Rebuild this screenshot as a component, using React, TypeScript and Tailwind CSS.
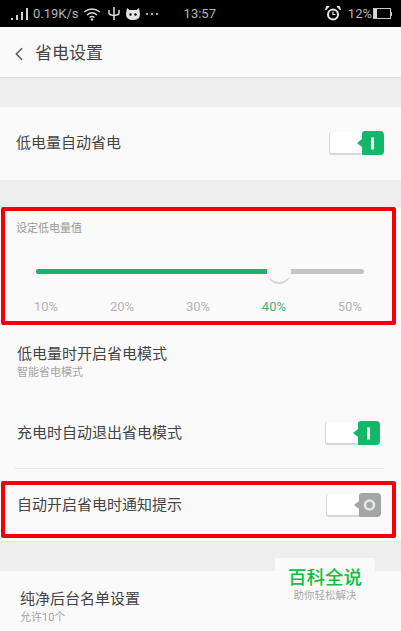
import { ChevronLeft } from "lucide-react";

const fontStack = "font-['Roboto','Noto_Sans_CJK_SC',sans-serif]";

function Toggle({ on }: { on: boolean }) {
  return (
    <div className="flex items-start">
      <div className="mt-px h-[23px] w-[33px] rounded-l-[3px] rounded-br-[2px] border-b-2 border-l border-[#d8d8d8] bg-white" />
      <svg width="27" height="25" viewBox="0 0 27 25" className="-ml-[5px]">
        <path
          d="M5 8 L5 3 Q5 0 8 0 L23 0 Q27 0 27 4 L27 20 Q27 24 23 24 L5 24 L5 16 L0 12 Z"
          fill={on ? "#12b76a" : "#a3a6a5"}
        />
        {on ? (
          <rect x="14" y="6.5" width="3" height="12" fill="#fff" />
        ) : (
          <circle cx="15.5" cy="12" r="4.5" fill="none" stroke="#e8e8e8" strokeWidth="2.5" />
        )}
      </svg>
    </div>
  );
}

function StatusBar() {
  return (
    <div className="flex h-[27px] items-center bg-black pl-[11px] pr-[9px] text-[13px] text-[#b5b5b5]">
      <svg width="18" height="14" viewBox="0 0 18 14" fill="#d0d0d0">
        <rect x="0" y="11" width="2" height="2" />
        <rect x="5" y="8" width="2" height="5" />
        <rect x="10" y="5" width="2" height="8" />
        <rect x="15" y="1" width="2" height="12" />
      </svg>
      <span className="ml-[4px]">0.19K/s</span>
      <svg width="18" height="14" viewBox="0 0 18 14" fill="none" stroke="#d8d8d8" strokeWidth="1.5" className="ml-[4px]">
        <path d="M1 5 Q9 -1 17 5" />
        <path d="M4 8 Q9 3.5 14 8" />
        <path d="M6.5 10.5 Q9 8.5 11.5 10.5" />
        <circle cx="9" cy="12.5" r="0.6" fill="#d8d8d8" />
      </svg>
      <svg width="14" height="15" viewBox="0 0 14 15" fill="none" stroke="#e0e0e0" strokeWidth="1.5" className="ml-[6px]">
        <path d="M7 1 V14" />
        <path d="M2 4 V7 Q2 9 7 9.5 Q12 9 12 7 V4" />
      </svg>
      <svg width="14" height="12" viewBox="0 0 14 12" fill="#e4e4e4" className="ml-[5px]">
        <path d="M1 0 L3.5 2 H10.5 L13 0 L14 6 Q14 12 7 12 Q0 12 0 6 Z" />
        <circle cx="4.5" cy="6.5" r="1.2" fill="#000" />
        <circle cx="9.5" cy="6.5" r="1.2" fill="#000" />
      </svg>
      <span className="ml-[6px] flex gap-[3px]">
        <i className="size-[2px] rounded-full bg-[#d8d8d8]" />
        <i className="size-[2px] rounded-full bg-[#d8d8d8]" />
        <i className="size-[2px] rounded-full bg-[#d8d8d8]" />
      </span>
      <span className="ml-[26px]">13:57</span>
      <svg width="16" height="15" viewBox="0 0 16 15" className="ml-auto">
        <circle cx="8" cy="8.5" r="5" fill="none" stroke="#e8e8e8" strokeWidth="2" />
        <path d="M8 5.5 V8.5 H10.5" fill="none" stroke="#e8e8e8" strokeWidth="1.2" />
        <path d="M0.5 4 L4 0.5 L1.5 0.5 Z M15.5 4 L12 0.5 L14.5 0.5 Z" fill="#e8e8e8" stroke="#e8e8e8" />
      </svg>
      <span className="ml-[7px]">12%</span>
      <div className="ml-px flex h-[11px] w-[18px] border border-[#c8c8c8]">
        <div className="h-full w-[3px] bg-[#d8d8d8]" />
      </div>
      <div className="h-[4px] w-px bg-[#c8c8c8]" />
    </div>
  );
}

const ticks = ["10%", "20%", "30%", "40%", "50%"];

export default function App() {
  return (
    <div className={`flex h-[631px] w-[401px] flex-col overflow-hidden bg-[#eeeeee] ${fontStack}`}>
      <StatusBar />

      <header className="flex h-[50px] items-center bg-[#fafafa] pl-[8px] pt-[3px] text-[#444]">
        <ChevronLeft className="size-[22px] text-[#555]" strokeWidth={1.5} />
        <h1 className="ml-[5px] text-[17px] font-normal">省电设置</h1>
      </header>
      <div className="h-px bg-[#dedede]" />

      <div className="mt-[29px] flex h-[73px] items-center justify-between bg-[#fafafa] pl-[16px] pr-[17px]">
        <span className="text-[15px] text-[#444]">低电量自动省电</span>
        <Toggle on />
      </div>

      <div className="mt-[27px] bg-[#fafafa]">
        <section className="mx-px h-[118px] w-[395px] rounded-[2px] border-[4px] border-[#f50000] pl-[11px] pr-[28px]">
          <p className="mt-[11px] text-[11px] leading-[14px] text-[#999]">设定低电量值</p>
          <div className="relative mt-[33px] ml-[20px] flex h-[5px] w-[328px] overflow-visible rounded-full bg-[#c4c4c4]">
            <div className="w-[243px] rounded-l-full bg-[#12b76a]" />
            <div className="absolute left-[231px] top-[-9.5px] size-[24px] rounded-full border-b-2 border-[#d6d6d6] bg-[#fafafa]" />
          </div>
          <div className="mt-[25px] ml-[18px] flex w-[328px] justify-between text-[13px] leading-[15px] text-[#b4b4b4]">
            {ticks.map((t) => (
              <span key={t} className={t === "40%" ? "text-[#3db57c]" : ""}>
                {t}
              </span>
            ))}
          </div>
        </section>
      </div>

      <div className="flex h-[157px] flex-col bg-[#fafafa] pl-[17px] pr-[16px]">
        <p className="mt-[19px] text-[15px] leading-[20px] text-[#444]">低电量时开启省电模式</p>
        <p className="mt-[1px] text-[11px] leading-[15px] text-[#a5a5a5]">智能省电模式</p>
        <div className="mt-[29px] flex h-[48px] items-center justify-between">
          <span className="text-[15px] text-[#444]">充电时自动退出省电模式</span>
          <div className="mr-[5px]">
            <Toggle on />
          </div>
        </div>
        <div className="-ml-[3px] mt-[11px] h-px bg-[#ebebeb]" />
      </div>

      <div className="bg-[#fafafa]">
        <section className="mx-px -mt-px flex h-[57px] w-[395px] items-center justify-between rounded-[2px] border-[4px] border-[#f50000] pb-[8px] pl-[12px] pr-[11px]">
          <span className="text-[15px] text-[#444]">自动开启省电时通知提示</span>
          <Toggle on={false} />
        </section>
        <div className="h-[3px]" />
        <div className="h-px bg-[#e4e4e4]" />
      </div>

      <div className="relative mt-[29px] flex-1 bg-[#fafafa] pl-[20px]">
        <p className="mt-[18px] text-[15px] leading-[20px] text-[#444]">纯净后台名单设置</p>
        <p className="mt-[1px] text-[11px] leading-[15px] text-[#a5a5a5]">允许10个</p>
        {/* watermark sits over the page */}
        <div className="absolute left-[275px] top-[-13px] flex h-[50px] w-[100px] flex-col items-center bg-[#fafafa] pt-[10px]">
          <span className="text-[18.5px] leading-[20px] font-medium text-[#0bc13f]">百科全说</span>
          <span className="mt-[1px] text-[10.5px] leading-[14px] text-[#a8a8a8]">助你轻松解决</span>
        </div>
      </div>
    </div>
  );
}
